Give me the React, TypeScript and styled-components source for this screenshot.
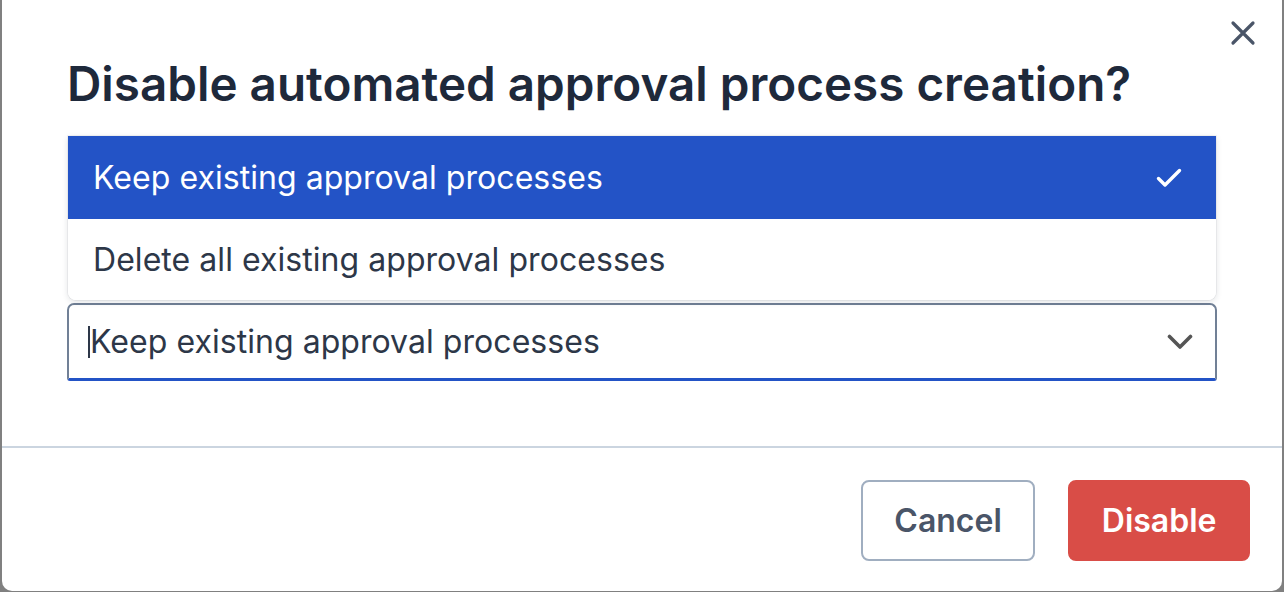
import React from "react";
import styled, { createGlobalStyle } from "styled-components";

const Global = createGlobalStyle`
  html, body { margin: 0; padding: 0; background: #808080; }
  body { font-family: Inter, "Open Sans", sans-serif; overflow: hidden; }
  * { box-sizing: border-box; }
`;

const Modal = styled.div`
  margin: 0 2px;
  width: 1280px;
  height: 591px;
  background: #ffffff;
  border-radius: 0 0 10px 10px;
  display: flex;
  flex-direction: column;
  position: relative;
`;

const CloseButton = styled.button`
  position: absolute;
  top: 17px;
  right: 23px;
  width: 32px;
  height: 32px;
  padding: 0;
  border: none;
  background: transparent;
  display: flex;
  align-items: center;
  justify-content: center;
  color: #4a5568;
`;

const Body = styled.div`
  padding: 54px 65px 0 65px;
  height: 446px;
  display: flex;
  flex-direction: column;
`;

const Title = styled.h1`
  margin: 0;
  font-size: 47.6px;
  line-height: 60px;
  font-weight: 600;
  color: #1e293b;
  letter-spacing: 0;
`;

const Field = styled.div`
  position: relative;
  margin-top: 189px;
`;

const Menu = styled.ul`
  position: absolute;
  left: 1px;
  right: 1px;
  bottom: calc(100% + 3px);
  margin: 0;
  padding: 0;
  list-style: none;
  background: #ffffff;
  border-radius: 0 0 8px 8px;
  box-shadow: 0 2px 6px rgba(30, 41, 59, 0.14), 0 0 0 1px rgba(30, 41, 59, 0.05);
  overflow: hidden;
`;

const Option = styled.li<{ $selected?: boolean }>`
  height: ${(p) => (p.$selected ? 83 : 81)}px;
  display: flex;
  align-items: center;
  justify-content: space-between;
  padding: 0 34px 0 25px;
  font-size: 32px;
  letter-spacing: 0.05px;
  color: ${(p) => (p.$selected ? "#ffffff" : "#2d3748")};
  background: ${(p) => (p.$selected ? "#2353c6" : "#ffffff")};
`;

const Select = styled.div`
  height: 78px;
  border: 2px solid #718096;
  border-bottom: 3px solid #2353c6;
  border-radius: 7px 7px 3px 3px;
  display: flex;
  align-items: center;
  justify-content: space-between;
  padding: 0 22px 0 19px;
  font-size: 32px;
  letter-spacing: 0.05px;
  color: #2d3748;
`;

const Value = styled.span`
  display: flex;
  align-items: center;
`;

const Caret = styled.span`
  width: 2px;
  height: 32px;
  background: #2d3748;
`;

const Footer = styled.div`
  border-top: 2px solid #cbd5e0;
  flex: 1;
  display: flex;
  justify-content: flex-end;
  align-items: flex-start;
  gap: 33px;
  padding: 32px 32px 0 0;
`;

const Button = styled.button<{ $danger?: boolean }>`
  height: 81px;
  padding: 0 31.5px;
  border-radius: 8px;
  font-family: Inter, "Open Sans", sans-serif;
  font-size: 32px;
  font-weight: 600;
  border: 2px solid ${(p) => (p.$danger ? "#d94d47" : "#a0aec0")};
  background: ${(p) => (p.$danger ? "#d94d47" : "#ffffff")};
  color: ${(p) => (p.$danger ? "#ffffff" : "#4a5568")};
`;

export default function App() {
  return (
    <>
      <Global />
      <Modal>
        <CloseButton aria-label="Close">
          <svg width="26" height="26" viewBox="0 0 26 26" fill="none">
            <path d="M3 3L23 23M23 3L3 23" stroke="currentColor" strokeWidth="3.2" strokeLinecap="round" />
          </svg>
        </CloseButton>
        <Body>
          <Title>Disable automated approval process creation?</Title>
          <Field>
            <Menu>
              <Option $selected>
                Keep existing approval processes
                <svg width="26" height="20" viewBox="0 0 26 20" fill="none">
                  <path d="M2.5 10.5L9 17L23.5 2.5" stroke="#ffffff" strokeWidth="3.4" strokeLinecap="round" strokeLinejoin="round" />
                </svg>
              </Option>
              <Option>Delete all existing approval processes</Option>
            </Menu>
            <Select>
              <Value>
                <Caret />
                Keep existing approval processes
              </Value>
              <svg width="26" height="16" viewBox="0 0 26 16" fill="none">
                <path d="M2.5 2.5L13 13L23.5 2.5" stroke="#555555" strokeWidth="3.6" strokeLinecap="round" strokeLinejoin="round" />
              </svg>
            </Select>
          </Field>
        </Body>
        <Footer>
          <Button>Cancel</Button>
          <Button $danger>Disable</Button>
        </Footer>
      </Modal>
    </>
  );
}
